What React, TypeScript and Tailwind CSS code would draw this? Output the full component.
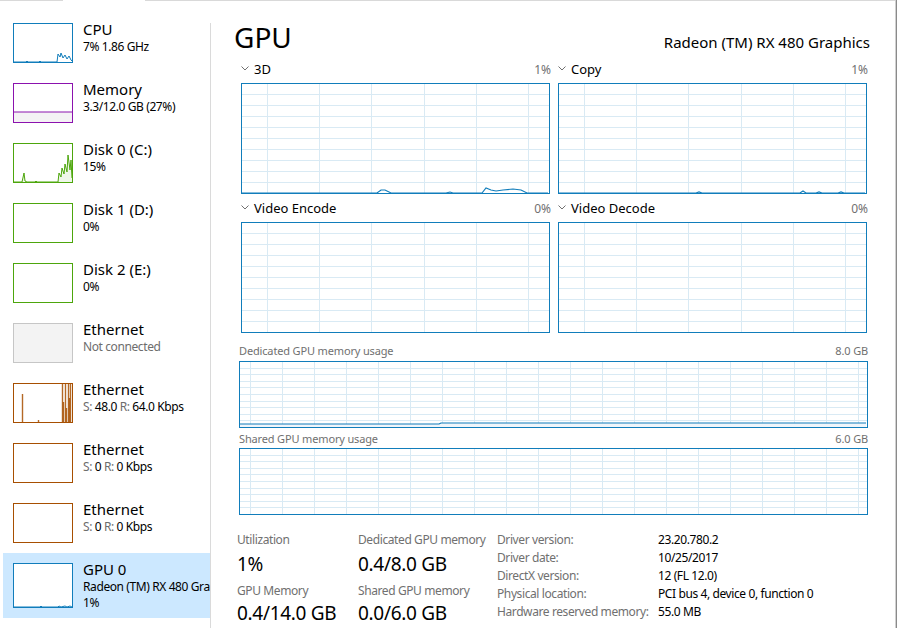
import React from "react";

type Pt = [number, number];

const BLUE = "#117dbb";
const GRID = "#d9eaf4";

const Graph = ({
  w,
  h,
  colStep,
  colOffset,
  rowStep,
  points,
  fill,
}: {
  w: number;
  h: number;
  colStep: number;
  colOffset: number;
  rowStep: number;
  points?: Pt[];
  fill?: string;
}) => {
  const cols: number[] = [];
  for (let x = colOffset; x < w - 1; x += colStep) cols.push(Math.round(x));
  const rows: number[] = [];
  for (let i = 1; i * rowStep < h - 2; i++) rows.push(Math.round(i * rowStep));
  const line = points?.map(([x, y]) => `${x},${h - 1 - y}`).join(" ");
  return (
    <svg width={w} height={h} className="block">
      <rect x={0} y={0} width={w} height={h} fill="#fff" />
      {cols.map((x) => (
        <line key={"c" + x} x1={x + 0.5} x2={x + 0.5} y1={0} y2={h} stroke={GRID} />
      ))}
      {rows.map((y) => (
        <line key={"r" + y} x1={0} x2={w} y1={y + 0.5} y2={y + 0.5} stroke={GRID} />
      ))}
      {points && fill && (
        <polygon points={`${points[0][0]},${h - 1} ${line} ${points[points.length - 1][0]},${h - 1}`} fill={fill} />
      )}
      {points && <polyline points={line} fill="none" stroke={BLUE} strokeWidth={1.2} />}
      <rect x={0.5} y={0.5} width={w - 1} height={h - 1} fill="none" stroke={BLUE} />
    </svg>
  );
};

const Thumb = ({
  color,
  h = 40,
  bg = "#fff",
  fill,
  points,
  spikes,
}: {
  color: string;
  h?: number;
  bg?: string;
  fill?: string;
  points?: Pt[];
  spikes?: Pt[];
}) => {
  const line = points?.map(([x, y]) => `${x},${h - 1 - y}`).join(" ");
  return (
    <svg width={60} height={h} className="block shrink-0">
      <rect x={0} y={0} width={60} height={h} fill={bg} />
      {points && fill && (
        <polygon points={`${points[0][0]},${h - 1} ${line} ${points[points.length - 1][0]},${h - 1}`} fill={fill} />
      )}
      {points && <polyline points={line} fill="none" stroke={color} strokeWidth={1} />}
      {spikes?.map(([x, y], i) => (
        <line key={i} x1={x + 0.5} x2={x + 0.5} y1={h - 1} y2={h - 1 - y} stroke={color} strokeWidth={1.4} opacity={0.85} />
      ))}
      <rect x={0.5} y={0.5} width={59} height={h - 1} fill="none" stroke={color} />
    </svg>
  );
};

const Chevron = () => (
  <svg width={8} height={5} className="mr-[5px] mt-[-3px]">
    <polyline points="0.5,0.5 4,4 7.5,0.5" fill="none" stroke="#707070" strokeWidth={1} />
  </svg>
);

const Gray = ({ children }: { children: React.ReactNode }) => <span className="text-[#6d6d6d]">{children}</span>;

const sideItems = [
  {
    title: "CPU",
    sub: <span>7% 1.86 GHz</span>,
    thumb: (
      <Thumb
        color={BLUE}
        points={[[1, 0], [13, 0], [14, 1], [15, 0], [26, 0], [27, 1], [28, 0], [44, 0], [45, 8], [47, 5], [48, 9], [50, 4], [52, 7], [54, 3], [56, 6], [58, 2], [59, 1]]}
      />
    ),
  },
  {
    title: "Memory",
    sub: <span>3.3/12.0 GB (27%)</span>,
    thumb: <Thumb color="#8b12ae" fill="#f4f2f4" points={[[1, 10], [59, 10]]} />,
  },
  {
    title: "Disk 0 (C:)",
    sub: <span>15%</span>,
    thumb: (
      <Thumb
        color="#4da60c"
        fill="#eff7e9"
        points={[[1, 0], [9, 0], [11, 9], [12, 1], [14, 0], [22, 0], [23, 1], [24, 0], [45, 0], [46, 9], [48, 5], [49, 14], [51, 8], [52, 18], [54, 10], [55, 27], [57, 12], [58, 22], [59, 4]]}
      />
    ),
  },
  { title: "Disk 1 (D:)", sub: <span>0%</span>, thumb: <Thumb color="#4da60c" /> },
  { title: "Disk 2 (E:)", sub: <span>0%</span>, thumb: <Thumb color="#4da60c" /> },
  {
    title: "Ethernet",
    sub: <Gray>Not connected</Gray>,
    thumb: <Thumb color="#c6c6c6" bg="#f3f3f3" />,
  },
  {
    title: "Ethernet",
    sub: (
      <span>
        <Gray>S:</Gray> 48.0 <Gray>R:</Gray> 64.0 Kbps
      </span>
    ),
    thumb: (
      <Thumb
        color="#a74f01"
        fill="#fcf3eb"
        spikes={[[9, 28], [25, 2], [49, 38], [50, 20], [52, 38], [53, 14], [55, 38], [56, 24], [57, 38]]}
      />
    ),
  },
  {
    title: "Ethernet",
    sub: (
      <span>
        <Gray>S:</Gray> 0 <Gray>R:</Gray> 0 Kbps
      </span>
    ),
    thumb: <Thumb color="#a74f01" />,
  },
  {
    title: "Ethernet",
    sub: (
      <span>
        <Gray>S:</Gray> 0 <Gray>R:</Gray> 0 Kbps
      </span>
    ),
    thumb: <Thumb color="#a74f01" />,
  },
];

const graphs: { label: string; pct: string; points?: Pt[] }[] = [
  {
    label: "3D",
    pct: "1%",
    points: [[1, 0], [136, 0], [140, 3], [144, 3], [150, 0], [205, 0], [209, 1], [212, 0], [241, 0], [245, 5], [250, 3], [255, 2], [262, 3], [272, 4], [280, 3], [286, 0], [307, 0]],
  },
  {
    label: "Copy",
    pct: "1%",
    points: [[1, 0], [138, 0], [141, 1], [144, 0], [242, 0], [245, 2], [248, 0], [258, 0], [261, 1], [264, 0], [280, 0], [283, 1], [286, 0], [307, 0]],
  },
  { label: "Video Encode", pct: "0%" },
  { label: "Video Decode", pct: "0%" },
];

const driverInfo = [
  ["Driver version:", "23.20.780.2"],
  ["Driver date:", "10/25/2017"],
  ["DirectX version:", "12 (FL 12.0)"],
  ["Physical location:", "PCI bus 4, device 0, function 0"],
  ["Hardware reserved memory:", "55.0 MB"],
];

const SideItem = ({
  thumb,
  title,
  lines,
  selected,
}: {
  thumb: React.ReactNode;
  title: string;
  lines: React.ReactNode[];
  selected?: boolean;
}) => (
  <div className={`ml-[3px] pl-[10px] pt-[10px] flex gap-[10px] ${selected ? "h-[65px] bg-[#cce8ff]" : "h-[60px]"}`}>
    {thumb}
    <div className="-mt-[3px] whitespace-nowrap">
      <div className="text-[15px] leading-[19px]">{title}</div>
      {lines.map((l, i) => (
        <div key={i} className="text-[12px] leading-[16px] tracking-[-0.4px]">
          {l}
        </div>
      ))}
    </div>
  </div>
);

export default function App() {
  return (
    <div className="w-[897px] h-[628px] flex bg-white overflow-hidden text-black font-['Segoe_UI','Noto_Sans',sans-serif]">
      <div className="flex-1 flex flex-col">
        {/* top tab line */}
        <div className="h-px flex shrink-0">
          <div className="w-[63px] bg-[#d9d9d9]" />
          <div className="w-[82px]" />
          <div className="flex-1 bg-[#d9d9d9]" />
        </div>

        <div className="flex-1 flex min-h-0">
          {/* sidebar */}
          <div className="w-[210px] shrink-0 pt-[12px] overflow-hidden">
            {sideItems.map((item, i) => (
              <SideItem key={i} thumb={item.thumb} title={item.title} lines={[item.sub]} />
            ))}
            <SideItem
              selected
              title="GPU 0"
              lines={["Radeon (TM) RX 480 Graphics", "1%"]}
              thumb={<Thumb color={BLUE} h={45} points={[[1, 0], [27, 0], [28, 1], [29, 0], [45, 0], [46, 1], [48, 0], [52, 1], [54, 0], [57, 1], [59, 0]]} />}
            />
          </div>

          <div className="w-px bg-[#dadada] mt-[22px] shrink-0" />

          {/* main panel */}
          <div className="flex-1 pl-[28px]">
            <div className="-ml-[5px] w-[636px] mt-[18px] flex justify-between items-baseline">
              <div className="text-[28px] leading-[36px]">GPU</div>
              <div className="text-[15px] leading-[20px]">Radeon (TM) RX 480 Graphics</div>
            </div>

            <div className="ml-[2px] mt-[5px] w-[626px] grid grid-cols-2 gap-x-[8px] gap-y-[5px]">
              {graphs.map((g) => (
                <div key={g.label}>
                  <div className="h-[20px] flex items-center justify-between text-[13px] -mr-[1px]">
                    <div className="flex items-center">
                      <Chevron />
                      <span>{g.label}</span>
                    </div>
                    <span className="text-[12px] text-[#707070]">{g.pct}</span>
                  </div>
                  <div className="mt-[3px]">
                    <Graph w={309} h={111} colStep={52.2} colOffset={26} rowStep={11} points={g.points} />
                  </div>
                </div>
              ))}
            </div>

            <div className="w-[629px] mt-[10px] flex justify-between text-[11px] leading-[16px] tracking-[-0.15px] text-[#707070]">
              <span>Dedicated GPU memory usage</span>
              <span>8.0 GB</span>
            </div>
            <div className="mt-[2px]">
              <Graph
                w={629}
                h={67}
                colStep={32}
                colOffset={11}
                rowStep={6.6}
                fill="#f0f6fb"
                points={[[1, 3], [200, 3], [202, 4], [627, 4]]}
              />
            </div>
            <div className="w-[629px] mt-[3px] flex justify-between text-[11px] leading-[16px] tracking-[-0.15px] text-[#707070]">
              <span>Shared GPU memory usage</span>
              <span>6.0 GB</span>
            </div>
            <div className="mt-[1px]">
              <Graph w={629} h={67} colStep={32} colOffset={11} rowStep={6.6} />
            </div>

            {/* stats */}
            <div className="-ml-[2px] mt-[16px] flex whitespace-nowrap">
              <div className="w-[121px]">
                <div className="text-[12px] leading-[18px] tracking-[-0.4px] text-[#707070]">Utilization</div>
                <div className="mt-[2px] text-[19px] leading-[26px] tracking-[-0.3px]">1%</div>
                <div className="mt-[5px] text-[12px] leading-[18px] tracking-[-0.4px] text-[#707070]">GPU Memory</div>
                <div className="text-[19px] leading-[26px] tracking-[-0.3px]">0.4/14.0 GB</div>
              </div>
              <div className="w-[139px]">
                <div className="text-[12px] leading-[18px] tracking-[-0.4px] text-[#707070]">Dedicated GPU memory</div>
                <div className="mt-[2px] text-[19px] leading-[26px] tracking-[-0.3px]">0.4/8.0 GB</div>
                <div className="mt-[5px] text-[12px] leading-[18px] tracking-[-0.4px] text-[#707070]">Shared GPU memory</div>
                <div className="text-[19px] leading-[26px] tracking-[-0.3px]">0.0/6.0 GB</div>
              </div>
              <div className="text-[12px] leading-[18px] tracking-[-0.4px]">
                {driverInfo.map(([k, v]) => (
                  <div key={k} className="flex">
                    <span className="w-[161px] text-[#707070]">{k}</span>
                    <span>{v}</span>
                  </div>
                ))}
              </div>
            </div>
          </div>
        </div>
      </div>
      <div className="w-px bg-[#d0d0d0]" />
      <div className="w-px bg-[#8a8a8a]" />
    </div>
  );
}
